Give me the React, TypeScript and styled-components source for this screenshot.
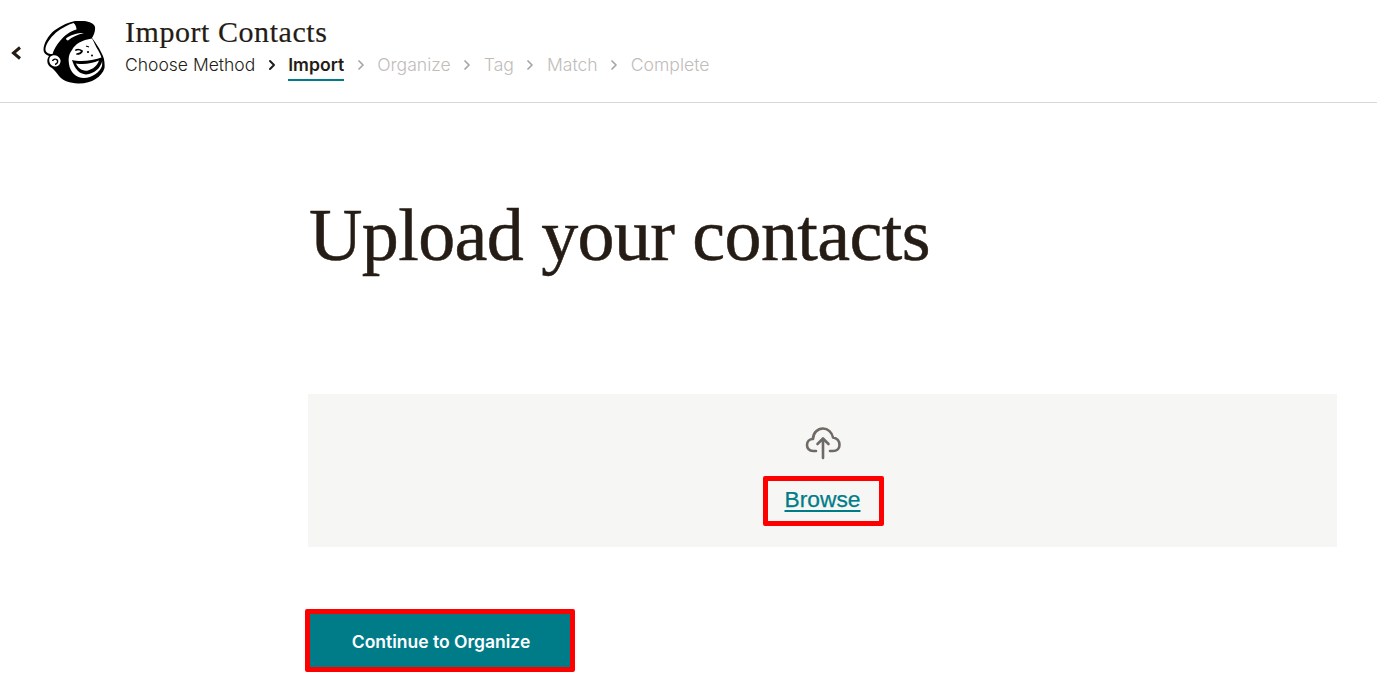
import React from 'react'
import styled, { createGlobalStyle } from 'styled-components'
import { ChevronRight } from 'lucide-react'

const GlobalStyle = createGlobalStyle`
  html, body {
    margin: 0;
    padding: 0;
    background: #fff;
    font-family: 'Inter', 'Liberation Sans', sans-serif;
  }
`

const Page = styled.div`
  width: 1377px;
  height: 697px;
  overflow: hidden;
`

const Header = styled.header`
  display: flex;
  align-items: flex-start;
  height: 102px;
  border-bottom: 1px solid #d9d9d9;
  box-sizing: content-box;
`

const BackButton = styled.button`
  display: flex;
  align-items: center;
  justify-content: center;
  width: 16px;
  height: 20px;
  margin: 43px 0 0 8px;
  padding: 0;
  border: 0;
  background: none;
  color: #241c15;
`

const BackIcon = styled.svg`
  width: 12px;
  height: 14px;
`

const Logo = styled.svg`
  flex: none;
  width: 62px;
  height: 64px;
  margin: 21px 20px 0 19px;
`

const HeaderText = styled.div`
  display: flex;
  flex-direction: column;
  padding-top: 14px;
`

const Title = styled.h1`
  margin: 0;
  font-family: 'Liberation Serif', serif;
  font-size: 30px;
  line-height: 36px;
  font-weight: 400;
  letter-spacing: 0.55px;
  color: #241c15;
  -webkit-text-stroke: 0.2px #241c15;
`

const Steps = styled.nav`
  display: flex;
  align-items: flex-start;
  margin-top: 2px;
`

const Step = styled.span<{ $state: 'done' | 'active' | 'todo' }>`
  height: 27px;
  line-height: 26px;
  font-size: ${p => (p.$state === 'done' ? '17.5px' : '17.6px')};
  font-weight: ${p => (p.$state === 'active' ? 600 : 300)};
  color: ${p => (p.$state === 'todo' ? '#bfbcb9' : '#241c15')};
  border-bottom: 2px solid ${p => (p.$state === 'active' ? '#007c89' : 'transparent')};
`

const Sep = styled.span<{ $muted?: boolean }>`
  display: flex;
  align-items: center;
  justify-content: center;
  width: 33px;
  height: 26px;
  color: ${p => (p.$muted ? '#a8a5a2' : '#241c15')};
`

const Main = styled.main`
  padding: 0 40px 0 308px;
`

const Heading = styled.h2`
  margin: 0;
  padding: 90px 0 0 1px;
  height: 200px;
  box-sizing: border-box;
  font-family: 'Liberation Serif', serif;
  font-size: 74px;
  line-height: 84px;
  font-weight: 400;
  letter-spacing: -0.6px;
  color: #241c15;
  -webkit-text-stroke: 0.5px #241c15;
`

const DropZone = styled.section`
  display: flex;
  flex-direction: column;
  align-items: center;
  height: 153px;
  margin-top: 91px;
  padding-top: 30px;
  box-sizing: border-box;
  background: #f6f6f4;
`

const CloudIcon = styled.svg`
  width: 36px;
  height: 36px;
  color: #6f6a66;
`

const BrowseBox = styled.div`
  display: flex;
  align-items: center;
  justify-content: center;
  width: 121px;
  height: 50px;
  margin: 16px 0 0 2px;
  padding: 0 2px 4px 0;
  box-sizing: border-box;
  border: 5px solid #ff0000;
  border-radius: 2px;
`

const BrowseLink = styled.a`
  font-family: 'Liberation Sans', sans-serif;
  font-size: 22.8px;
  font-weight: 400;
  color: #007c89;
  text-decoration: underline;
  text-decoration-thickness: 2px;
  text-underline-offset: 3px;
  -webkit-text-stroke: 0.25px #007c89;
`

const ContinueButton = styled.button`
  display: block;
  width: 270px;
  height: 63px;
  margin: 62px 0 0 -3px;
  padding: 2px 0 0 2px;
  box-sizing: border-box;
  border: 5px solid #ff0000;
  border-radius: 2px;
  background: #007c89;
  color: #fff;
  font-family: 'Inter', sans-serif;
  font-size: 17.5px;
  font-weight: 600;
`

const steps = ['Organize', 'Tag', 'Match', 'Complete']

export default function App() {
  return (
    <React.Fragment>
      <GlobalStyle />
      <Page>
        <Header>
          <BackButton aria-label="Back">
            <BackIcon viewBox="0 0 12 14" fill="none" stroke="currentColor" strokeWidth="3">
              <path d="M10 1.5L3.5 7L10 12.5" />
            </BackIcon>
          </BackButton>
          <Logo viewBox="43 21 62 64" aria-hidden="true">
            {/* head and cap */}
            <path
              fill="#000"
              d="M75 21C84 20 94 22 95 27C95.5 31 94 35 92 38C96 43 99 48 101 52C104 57 105 62 104.5 68C102 77 91 84 78 83.5C70 83 63 81 59 76C57 73 55 71 52 68C47 66 46 60 49 56C46 55 43.5 53 43.5 50C43.5 44 48 35 55 30C62 25 69 22 75 21Z"
            />
            {/* brim */}
            <path
              fill="#fff"
              d="M45.5 50C45 45 50 38 56 32.5C62 28 68 24.5 73.5 23C75.5 24.5 76.5 27 76.5 29.5C70 31 64 36 60 41C56.5 45 54 49 52.5 54C50 54.5 46 53 45.5 50Z"
            />
            <path fill="#fff" d="M66 38.5C70 35 77 33 84 33C78 34.5 72 37 68 40.5C67 40.5 66 39.5 66 38.5Z" />
            {/* face */}
            <path
              fill="#fff"
              d="M72 50C75 44 82 40 92 38.5C94 42 96 47 98 50C101 55 103 60 102 66C100 72 92 78 84 78C76 78 70 72 69 64C68 58 69 54 72 50Z"
            />
            {/* ear */}
            <path fill="#fff" d="M50 57C53 54 59 55 60.5 60C61 64 58 67 54.5 66.5C50 66 48 60.5 50 57Z" />
            <path
              fill="none"
              stroke="#000"
              strokeWidth="1.4"
              d="M55 64.5C58 63.5 58.5 60.5 56.5 59.5C55 58.5 53 59.5 52.5 61"
            />
            {/* mouth */}
            <path fill="#000" d="M72 60C80 62 92 61 103 57C102 66 97 72 89 74C81 76 75 70 72 60Z" />
            <path fill="#fff" d="M76 63.5C84 65 92 63.5 99 60.5C97 66 93 69 88 70.5C82 71.5 78 68 76 63.5Z" />
            {/* wink and nose */}
            <path
              fill="none"
              stroke="#000"
              strokeWidth="1.7"
              strokeLinecap="round"
              d="M76 50C78 49 80 49.5 82 51M77 54C79 54 81 53 82 51.5"
            />
            <circle cx="88" cy="52" r="1.1" fill="#000" />
            <circle cx="92" cy="55.5" r="1" fill="#000" />
            <path fill="none" stroke="#000" strokeWidth="1.2" d="M86 46L89 47" />
          </Logo>
          <HeaderText>
            <Title>Import Contacts</Title>
            <Steps>
              <Step $state="done">Choose Method</Step>
              <Sep>
                <ChevronRight size={16} strokeWidth={3} />
              </Sep>
              <Step $state="active">Import</Step>
              {steps.map(s => (
                <React.Fragment key={s}>
                  <Sep $muted>
                    <ChevronRight size={16} strokeWidth={2.6} />
                  </Sep>
                  <Step $state="todo">{s}</Step>
                </React.Fragment>
              ))}
            </Steps>
          </HeaderText>
        </Header>
        <Main>
          <Heading>Upload your contacts</Heading>
          <DropZone>
            <CloudIcon viewBox="0 0 36 36" fill="none" stroke="currentColor" strokeWidth="2.6" strokeLinecap="round" strokeLinejoin="round">
              <path d="M11 27H8C4 27 2 24 2 21C2 17.5 4.5 15 8 15C8 9 12.5 4.5 18 4.5C23 4.5 27 8.5 28 13.5C32 14 34.5 17 34.5 21C34.5 24.5 32 27 28 27H25" />
              <path d="M18 34V15M12.5 20L18 14.5L23.5 20" />
            </CloudIcon>
            <BrowseBox>
              <BrowseLink href="#">Browse</BrowseLink>
            </BrowseBox>
          </DropZone>
          <ContinueButton>Continue to Organize</ContinueButton>
        </Main>
      </Page>
    </React.Fragment>
  )
}
